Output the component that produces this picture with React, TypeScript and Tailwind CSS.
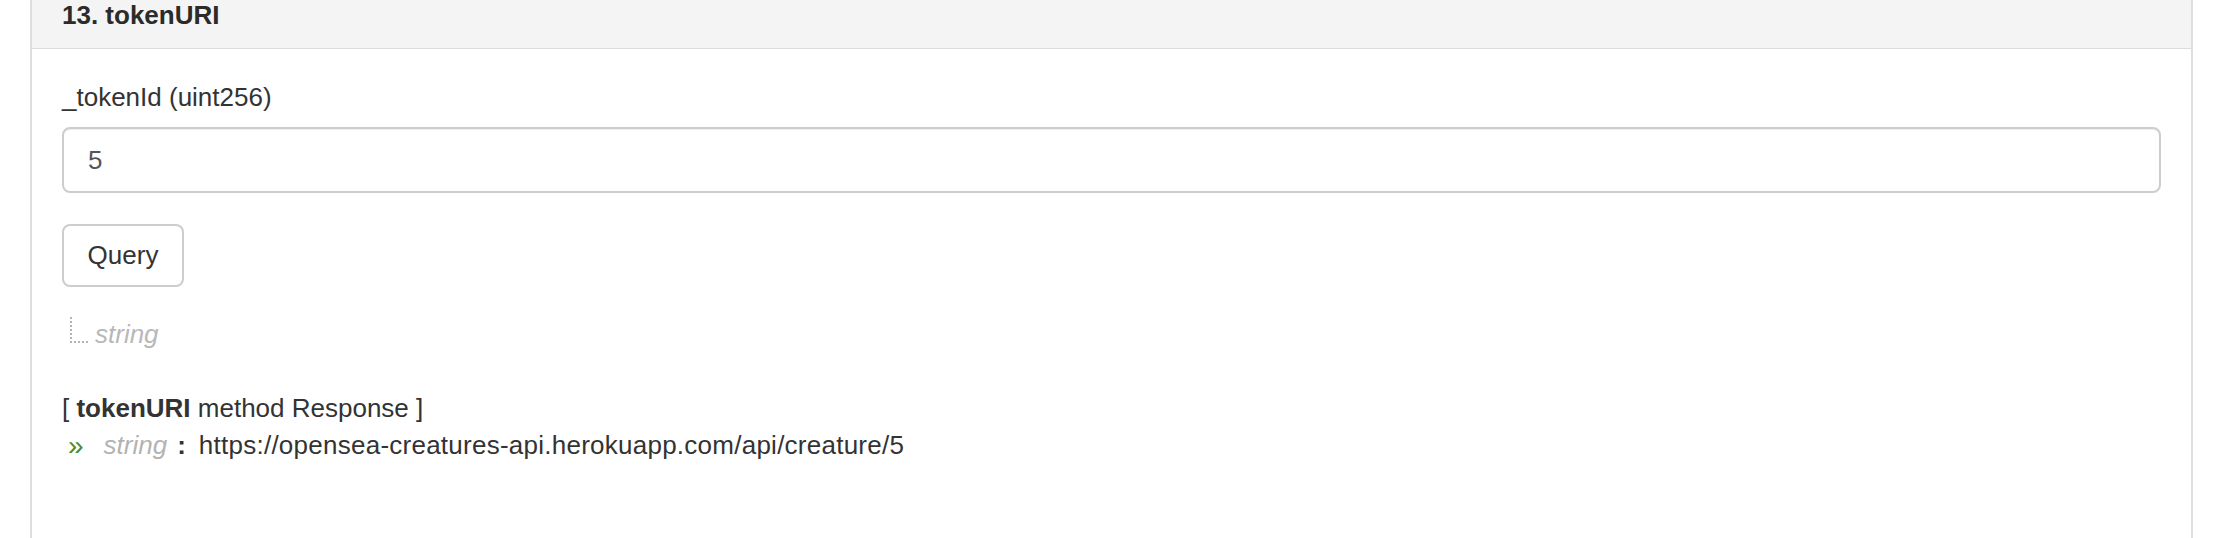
const App = () => {
  return (
    <div className="w-[2236px] h-[538px] overflow-hidden bg-white font-['Liberation_Sans',Arial,sans-serif] text-[26px] text-[#333]">
      <div className="ml-[30px] w-[2163px] h-full border-x-2 border-[#dedede] flex flex-col">
        {/* panel heading */}
        <div className="h-[49px] shrink-0 bg-[#f4f4f4] border-b border-[#dcdcdc] px-[30px]">
          <h3 className="leading-[30px] font-bold text-[#2b2b2b]">13. tokenURI</h3>
        </div>

        {/* panel body */}
        <div className="flex-1 px-[30px] pt-[30px]">
          <div className="leading-[36px]">_tokenId (uint256)</div>

          <input
            readOnly
            defaultValue="5"
            className="mt-[12px] block w-full h-[66px] rounded-[8px] border-2 border-[#cdcdcd] px-[24px] text-[#555] shadow-[inset_0_1px_1px_rgba(0,0,0,0.075)] outline-none"
          />

          <button className="mt-[31px] flex items-center justify-center w-[122px] h-[63px] rounded-[8px] border-2 border-[#cdcdcd] bg-white text-[#333]">
            Query
          </button>

          <div className="mt-[29px] flex items-end h-[36px] leading-[36px]">
            <span className="ml-[8px] mb-[9px] w-[18px] h-[26px] border-l-2 border-b-2 border-dotted border-[#b5b5b5]" />
            <span className="ml-[7px] italic text-[#b8b8b8]">string</span>
          </div>

          <div className="mt-[38px] leading-[37px]">
            [ <strong className="font-bold">tokenURI</strong> method Response ]
          </div>
          <div className="flex items-center leading-[37px]">
            <span className="ml-[6px] text-[28px] text-[#4a8a2c]">»</span>
            <span className="ml-[20px] italic text-[#b3b3b3]">string</span>
            <span className="ml-[10px] font-bold">:</span>
            <span className="ml-[13px] tracking-[0.25px]">https://opensea-creatures-api.herokuapp.com/api/creature/5</span>
          </div>
        </div>
      </div>
    </div>
  );
};

export default App;
